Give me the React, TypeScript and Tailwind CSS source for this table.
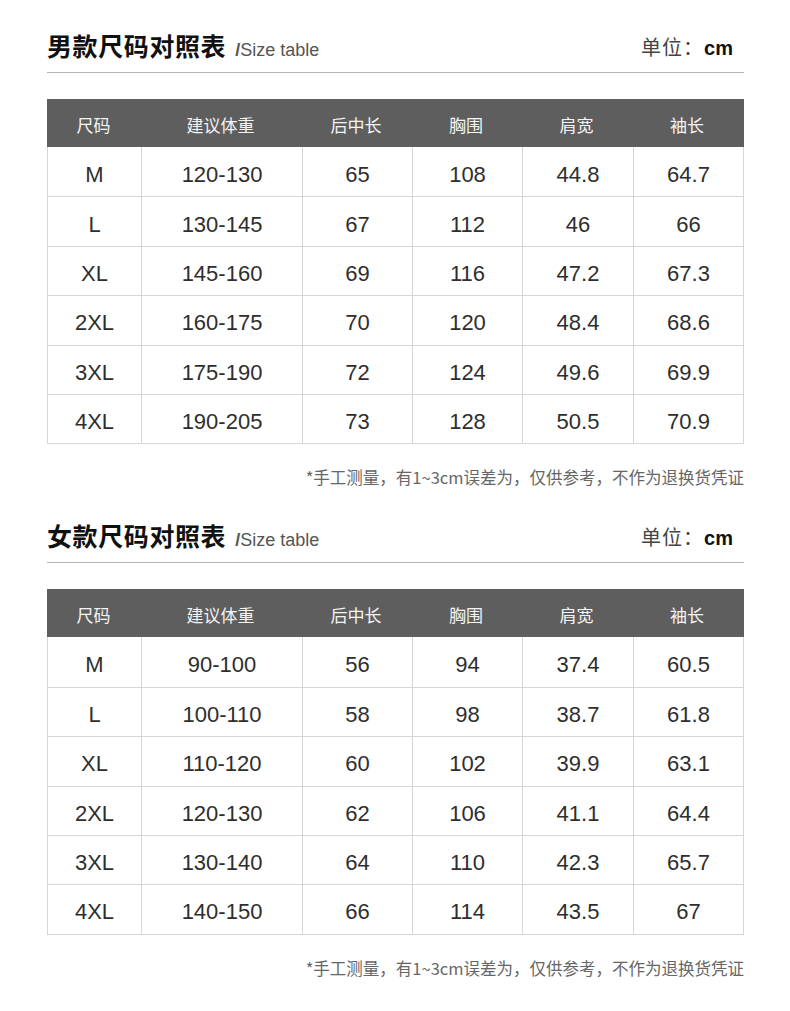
const cols = ["尺码", "建议体重", "后中长", "胸围", "肩宽", "袖长"];

const men = [
  ["M", "120-130", "65", "108", "44.8", "64.7"],
  ["L", "130-145", "67", "112", "46", "66"],
  ["XL", "145-160", "69", "116", "47.2", "67.3"],
  ["2XL", "160-175", "70", "120", "48.4", "68.6"],
  ["3XL", "175-190", "72", "124", "49.6", "69.9"],
  ["4XL", "190-205", "73", "128", "50.5", "70.9"],
];

const women = [
  ["M", "90-100", "56", "94", "37.4", "60.5"],
  ["L", "100-110", "58", "98", "38.7", "61.8"],
  ["XL", "110-120", "60", "102", "39.9", "63.1"],
  ["2XL", "120-130", "62", "106", "41.1", "64.4"],
  ["3XL", "130-140", "64", "110", "42.3", "65.7"],
  ["4XL", "140-150", "66", "114", "43.5", "67"],
];

const cjk = { fontFamily: '"Noto Sans CJK SC", "Noto Sans", sans-serif' };
const arial = { fontFamily: '"Liberation Sans", Arial, "Noto Sans CJK SC", sans-serif' };

function SizeTable({ title, rows }: { title: string; rows: string[][] }) {
  return (
    <section className="flex flex-col">
      {/* title + unit */}
      <div className="flex items-center justify-between h-[30px]">
        <div className="flex items-baseline gap-[9px]">
          <h2 className="text-[25px] font-bold text-[#111] leading-[30px] tracking-[0.6px]" style={cjk}>
            {title}
          </h2>
          <span className="text-[18px] text-[#555]" style={arial}>
            <span className="font-bold">/</span>Size table
          </span>
        </div>
        <div className="flex items-baseline mr-[11px] text-[20px]" style={cjk}>
          <span className="text-[#444] tracking-[1px]">单位：</span>
          <span className="text-[#111] font-bold text-[20px]" style={arial}>cm</span>
        </div>
      </div>
      <div className="mt-[10px] h-px bg-[#b5b5b5]" />

      {/* table */}
      <div className="mt-[26px] border-x border-b border-[#d6d6d6]">
        <div className="grid grid-cols-[93px_161px_110px_110px_111px_110px] h-[48px] bg-[#5e5e5e] -mx-px">
          {cols.map((c) => (
            <div key={c} className="flex items-center justify-center pt-[3px] text-[17px] text-[#f4f4f4]" style={cjk}>
              {c}
            </div>
          ))}
        </div>
        {rows.map((r, i) => (
          <div
            key={i}
            className={
              "grid grid-cols-[93px_161px_110px_110px_111px_110px] h-[49.4px] " +
              (i > 0 ? "border-t border-[#d6d6d6]" : "")
            }
          >
            {r.map((v, j) => (
              <div
                key={j}
                className={
                  "flex items-center justify-center pt-[5px] text-[22px] text-[#2e2e2e] " +
                  (j > 0 ? "border-l border-[#d6d6d6]" : "")
                }
                style={arial}
              >
                {v}
              </div>
            ))}
          </div>
        ))}
      </div>

      <p className="mt-[23px] text-right text-[16.5px] leading-[20px] text-[#666]" style={cjk}>
        *手工测量，有1~3cm误差为，仅供参考，不作为退换货凭证
      </p>
    </section>
  );
}

export default function App() {
  return (
    <div className="w-[790px] min-h-[1011px] bg-white pl-[47px] pr-[46px] pt-[32px] flex flex-col gap-[35px]">
      <SizeTable title="男款尺码对照表" rows={men} />
      <SizeTable title="女款尺码对照表" rows={women} />
    </div>
  );
}
